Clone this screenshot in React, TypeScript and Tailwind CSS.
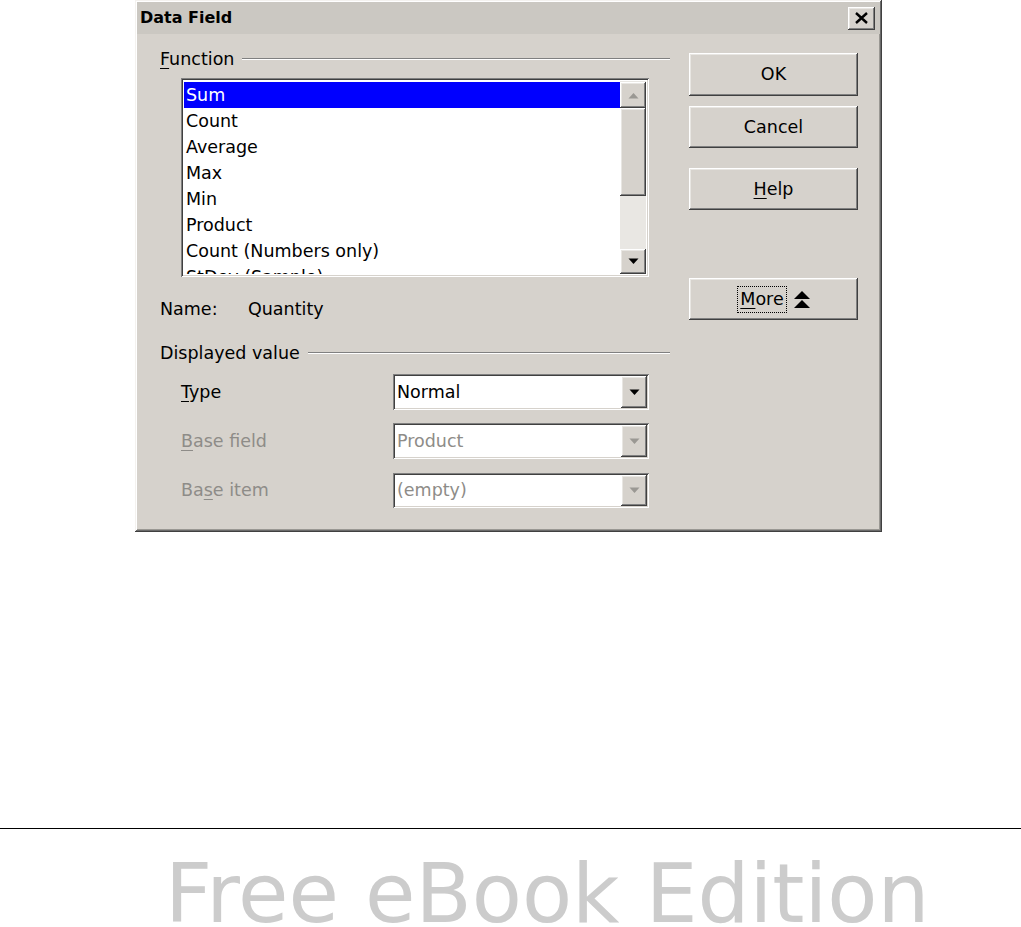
import React from "react";

const raised =
  "shadow-[inset_-1px_-1px_0_#404040,inset_1px_1px_0_#ffffff,inset_-2px_-2px_0_#808080,inset_2px_2px_0_#e8e6e2]";
const sunken =
  "shadow-[inset_1px_1px_0_#808080,inset_-1px_-1px_0_#ffffff,inset_2px_2px_0_#404040,inset_-2px_-2px_0_#d6d2cc]";

const functions = [
  "Sum",
  "Count",
  "Average",
  "Max",
  "Min",
  "Product",
  "Count (Numbers only)",
  "StDev (Sample)",
];

function Arrow({ up, disabled }: { up?: boolean; disabled?: boolean }) {
  return (
    <svg width="11" height="7" viewBox="0 0 11 7">
      <path
        d={up ? "M0.5 6.5 L5.5 1 L10.5 6.5 Z" : "M0.5 0.5 L10.5 0.5 L5.5 6 Z"}
        fill={disabled ? "#9a9893" : "#000000"}
      />
    </svg>
  );
}

function SmallBtn({ children, className = "" }: { children: React.ReactNode; className?: string }) {
  return (
    <div className={`flex items-center justify-center bg-[#d6d2cc] ${raised} ${className}`}>
      {children}
    </div>
  );
}

function Separator({ label, underline }: { label: string; underline?: number }) {
  return (
    <div className="flex h-[20px] items-center">
      <span className="whitespace-nowrap pr-[8px]">
        <Mnemonic text={label} index={underline} />
      </span>
      <div className="h-[2px] flex-1 border-t border-b border-t-[#808080] border-b-white" />
    </div>
  );
}

function Mnemonic({ text, index }: { text: string; index?: number }) {
  if (index === undefined) return <>{text}</>;
  return (
    <>
      {text.slice(0, index)}
      <span className="underline underline-offset-[3px]">{text[index]}</span>
      {text.slice(index + 1)}
    </>
  );
}

function Combo({ value, disabled, className = "" }: { value: string; disabled?: boolean; className?: string }) {
  return (
    <div className={`flex w-[256px] items-center bg-white p-[2px] ${sunken} ${className}`}>
      <span className={`flex-1 pl-[2px] ${disabled ? "text-[#8e8c88]" : "text-black"}`}>{value}</span>
      <SmallBtn className="h-full w-[26px]">
        <Arrow disabled={disabled} />
      </SmallBtn>
    </div>
  );
}

function DialogButton({ children, className = "", focus }: { children: React.ReactNode; className?: string; focus?: boolean }) {
  return (
    <div className={`flex h-[42px] w-[169px] items-center justify-center bg-[#d6d2cc] ${raised} ${className}`}>
      {focus ? (
        <span className="flex items-center">
          <span className="flex h-[27px] items-center border border-dotted border-black px-[2px]">{children}</span>
          <svg className="ml-[7px]" width="16" height="17" viewBox="0 0 16 17">
            <path d="M8 0 L16 8 L0 8 Z M8 9 L16 17 L0 17 Z" fill="#000" />
          </svg>
        </span>
      ) : (
        children
      )}
    </div>
  );
}

export default function App() {
  return (
    <div
      className="h-[927px] w-[1021px] overflow-hidden bg-white text-[17.5px] text-black"
      style={{ fontFamily: '"DejaVu Sans", Verdana, sans-serif' }}
    >
      <div
        className={`ml-[135px] flex h-[532px] w-[747px] flex-col bg-[#d6d2cc] shadow-[inset_-1px_-1px_0_#404040,inset_1px_1px_0_#f4f2ef,inset_-2px_-2px_0_#6a6a6a,inset_2px_2px_0_#ffffff,inset_-3px_-3px_0_#9a9893]`}
      >
        {/* title bar */}
        <div className="mx-[2px] mt-[2px] flex h-[32px] items-center bg-[#cbc8c2] pl-[3px] pr-[5px]">
          <span className="flex-1 text-[16px] font-bold">Data Field</span>
          <SmallBtn className="h-[23px] w-[27px]">
            <svg width="13" height="12" viewBox="0 0 13 12">
              <path d="M1 1 L12 11 M12 1 L1 11" stroke="#000" strokeWidth="2.4" />
            </svg>
          </SmallBtn>
        </div>

        <div className="flex flex-1">
          {/* left column */}
          <div className="w-[554px] pl-[25px] pr-[19px]">
            <div className="mt-[15px]">
              <Separator label="Function" underline={0} />
            </div>

            <div className={`ml-[21px] mt-[9px] flex h-[199px] w-[468px] bg-white p-[3px] ${sunken}`}>
              <div className="flex-1 overflow-hidden pt-[1px]">
                {functions.map((f, i) => (
                  <div
                    key={f}
                    className={`flex h-[26px] items-center pl-[2px] ${i === 0 ? "bg-[#0000ff] text-white" : ""}`}
                  >
                    {f}
                  </div>
                ))}
              </div>
              <div className="flex w-[26px] flex-col bg-[#e9e7e3] pt-[1px]">
                <SmallBtn className="h-[26px] w-full">
                  <Arrow up disabled />
                </SmallBtn>
                <SmallBtn className="h-[88px] w-full">
                  <span />
                </SmallBtn>
                <div className="flex-1" />
                <SmallBtn className="h-[25px] w-full">
                  <Arrow />
                </SmallBtn>
              </div>
            </div>

            <div className="mt-[22px] flex h-[20px] items-center">
              <span className="w-[88px]">Name:</span>
              <span>Quantity</span>
            </div>

            <div className="mt-[24px]">
              <Separator label="Displayed value" />
            </div>

            <div className="ml-[21px] mt-[11px] flex h-[36px] items-center">
              <span className="w-[212px]">
                <Mnemonic text="Type" index={0} />
              </span>
              <Combo value="Normal" className="h-[36px]" />
            </div>

            <div className="ml-[21px] mt-[13px] flex h-[36px] items-center text-[#8e8c88]">
              <span className="w-[212px]">
                <Mnemonic text="Base field" index={0} />
              </span>
              <Combo value="Product" disabled className="h-[36px]" />
            </div>

            <div className="ml-[21px] mt-[14px] flex h-[35px] items-center text-[#8e8c88]">
              <span className="w-[212px]">
                <Mnemonic text="Base item" index={2} />
              </span>
              <Combo value="(empty)" disabled className="h-[35px]" />
            </div>
          </div>

          {/* right column */}
          <div className="flex flex-col">
            <DialogButton className="mt-[19px] h-[43px]">OK</DialogButton>
            <DialogButton className="mt-[10px]">Cancel</DialogButton>
            <DialogButton className="mt-[20px]">
              <Mnemonic text="Help" index={0} />
            </DialogButton>
            <DialogButton className="mt-[68px]" focus>
              <Mnemonic text="More" index={0} />
            </DialogButton>
          </div>
        </div>
      </div>

      <div className="mt-[296px] h-px w-full bg-black" />
      <div className="mt-[33px] whitespace-nowrap pl-[165px] text-[82px] leading-[64px] text-[#cccccc]">
        Free eBook Edition
      </div>
    </div>
  );
}
